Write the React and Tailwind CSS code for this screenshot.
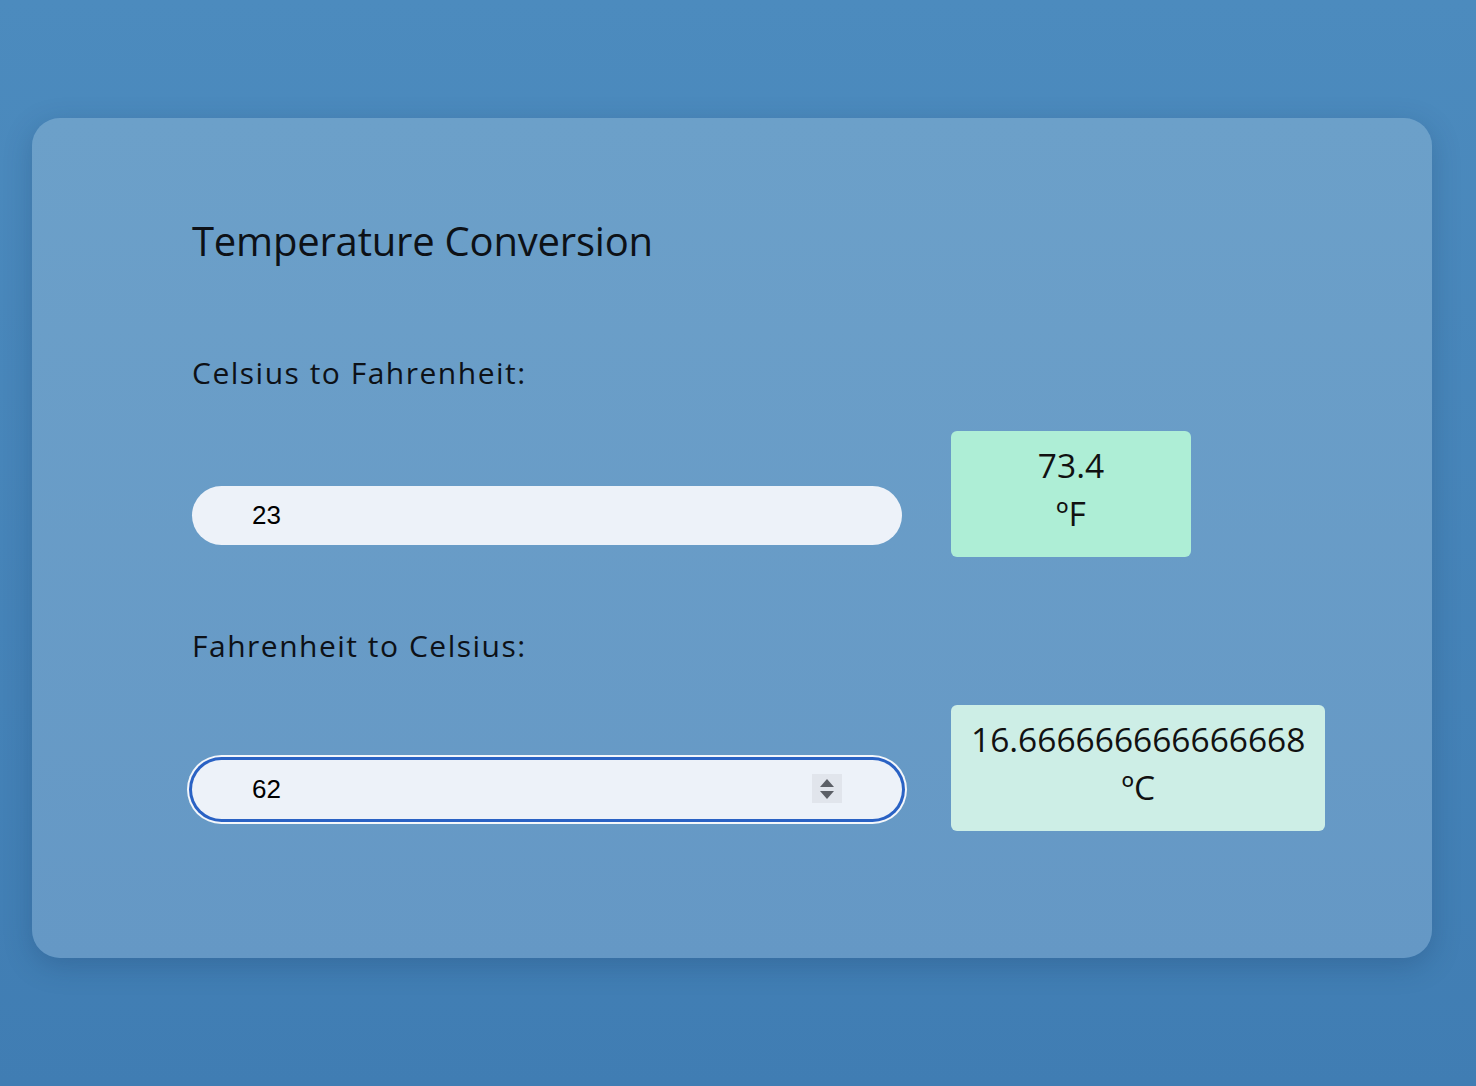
import { useState } from 'react';

const sans = { fontFamily: '"Open Sans", "Noto Sans", sans-serif' };

const ResultBox = ({ value, unit, tone }) => (
    <div
        className={`min-w-[240px] px-[20px] pt-[10px] pb-[20px] rounded-[6px] text-center text-[33.5px] leading-[48px] text-[#111] ${tone}`}
        style={sans}
    >
        <div>{value}</div>
        <div>{unit}</div>
    </div>
);

const App = () => {
    const [celsius, setCelsius] = useState('23');
    const [fahrenheit, setFahrenheit] = useState('62');

    const toF = celsius === '' ? '' : (parseFloat(celsius) * 9) / 5 + 32;
    const toC = fahrenheit === '' ? '' : ((parseFloat(fahrenheit) - 32) * 5) / 9;

    return (
        <div className="min-h-screen bg-gradient-to-b from-[#4c8bbe] to-[#407db3] pt-[118px] pl-[32px] pb-[128px]">
            <div className="w-[1400px] h-[840px] rounded-[28px] bg-gradient-to-b from-[#6ca0c9] to-[#6598c5] shadow-[0_8px_28px_rgba(20,50,90,0.25)] pl-[160px] pt-[99px]">
                <h1 className="text-[40px] leading-[48px] font-normal text-[#0d1117] tracking-[-0.2px]" style={sans}>
                    Temperature Conversion
                </h1>

                <p className="mt-[90px] text-[30px] leading-[36px] text-[#0d1117] tracking-[1.5px]" style={sans}>
                    Celsius to Fahrenheit:
                </p>
                <div className="mt-[40px] flex items-end gap-[49px]">
                    <input
                        type="number"
                        value={celsius}
                        onChange={(e) => setCelsius(e.target.value)}
                        className="mb-[12px] w-[710px] h-[59px] rounded-full bg-[#edf2f9] pl-[60px] text-[26px] text-black outline-none [appearance:textfield] [&::-webkit-inner-spin-button]:appearance-none"
                        style={{ fontFamily: '"Liberation Sans", Arial, sans-serif' }}
                    />
                    <ResultBox value={toF} unit="ºF" tone="bg-[#aeeed6]" />
                </div>

                <p className="mt-[71px] text-[30px] leading-[36px] text-[#0d1117] tracking-[1.5px]" style={sans}>
                    Fahrenheit to Celsius:
                </p>
                <div className="mt-[41px] flex items-end gap-[49px]">
                    <div className="relative mb-[12px]">
                        <input
                            type="number"
                            value={fahrenheit}
                            onChange={(e) => setFahrenheit(e.target.value)}
                            className="w-[710px] h-[59px] rounded-full bg-[#edf2f9] pl-[60px] text-[26px] text-black outline-none shadow-[0_0_0_3px_#2a62c4,0_0_0_5px_#f4f7fb] [appearance:textfield] [&::-webkit-inner-spin-button]:appearance-none"
                            style={{ fontFamily: '"Liberation Sans", Arial, sans-serif' }}
                        />
                        {/* spinner shown on the focused number field */}
                        <div className="absolute right-[60px] top-[14px] w-[30px] h-[29px] bg-[#e1e5ec] flex flex-col items-center justify-center gap-[4px]">
                            <svg width="14" height="8" viewBox="0 0 14 8"><path d="M7 0 L14 8 L0 8 Z" fill="#5b5f66" /></svg>
                            <svg width="14" height="8" viewBox="0 0 14 8"><path d="M0 0 L14 0 L7 8 Z" fill="#5b5f66" /></svg>
                        </div>
                    </div>
                    <ResultBox value={toC} unit="ºC" tone="bg-[#cdeee6]" />
                </div>
            </div>
        </div>
    );
};

export default App;
